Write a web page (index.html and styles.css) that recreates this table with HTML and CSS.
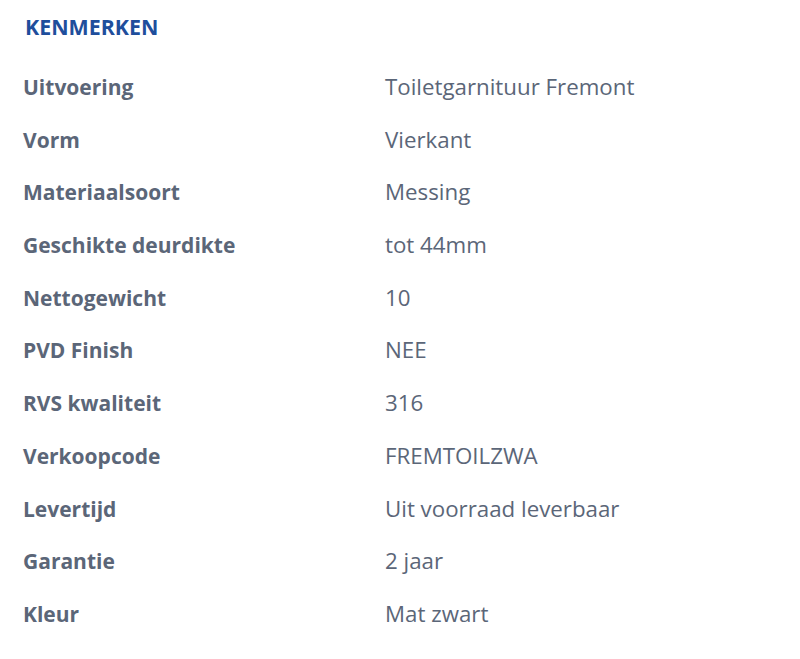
FILE: index.html
```html
<!DOCTYPE html>
<html lang="nl">
<head>
<meta charset="utf-8">
<link rel="stylesheet" href="styles.css">
</head>
<body>
<section class="specs">
  <h2 class="specs-title">KENMERKEN</h2>
  <dl class="specs-list">
    <div class="row"><dt>Uitvoering</dt><dd>Toiletgarnituur Fremont</dd></div>
    <div class="row"><dt>Vorm</dt><dd>Vierkant</dd></div>
    <div class="row"><dt>Materiaalsoort</dt><dd>Messing</dd></div>
    <div class="row"><dt>Geschikte deurdikte</dt><dd>tot 44mm</dd></div>
    <div class="row"><dt>Nettogewicht</dt><dd>10</dd></div>
    <div class="row"><dt>PVD Finish</dt><dd>NEE</dd></div>
    <div class="row"><dt>RVS kwaliteit</dt><dd>316</dd></div>
    <div class="row"><dt>Verkoopcode</dt><dd>FREMTOILZWA</dd></div>
    <div class="row"><dt>Levertijd</dt><dd>Uit voorraad leverbaar</dd></div>
    <div class="row"><dt>Garantie</dt><dd>2 jaar</dd></div>
    <div class="row"><dt>Kleur</dt><dd>Mat zwart</dd></div>
  </dl>
</section>
</body>
</html>
```
FILE: styles.css
```css
* { box-sizing: border-box; }
body {
  margin: 0;
  background: #fff;
  font-family: "Open Sans", "Noto Sans", sans-serif;
  color: #5b6678;
}
.specs {
  padding: 12px 0 0 23px;
}
.specs-title {
  margin: 0 0 0 2px;
  font-size: 21.4px;
  line-height: 30px;
  font-weight: 700;
  color: #1f4e9c;
}
.specs-list {
  margin: 30px 0 0 0;
  display: flex;
  flex-direction: column;
}
.row {
  display: grid;
  grid-template-columns: 362px 1fr;
  height: 52.7px;
  align-items: start;
}
dt {
  font-weight: 700;
  font-size: 21px;
  line-height: 30px;
}
dd {
  margin: 0;
  font-size: 22.3px;
  line-height: 30px;
}
```
